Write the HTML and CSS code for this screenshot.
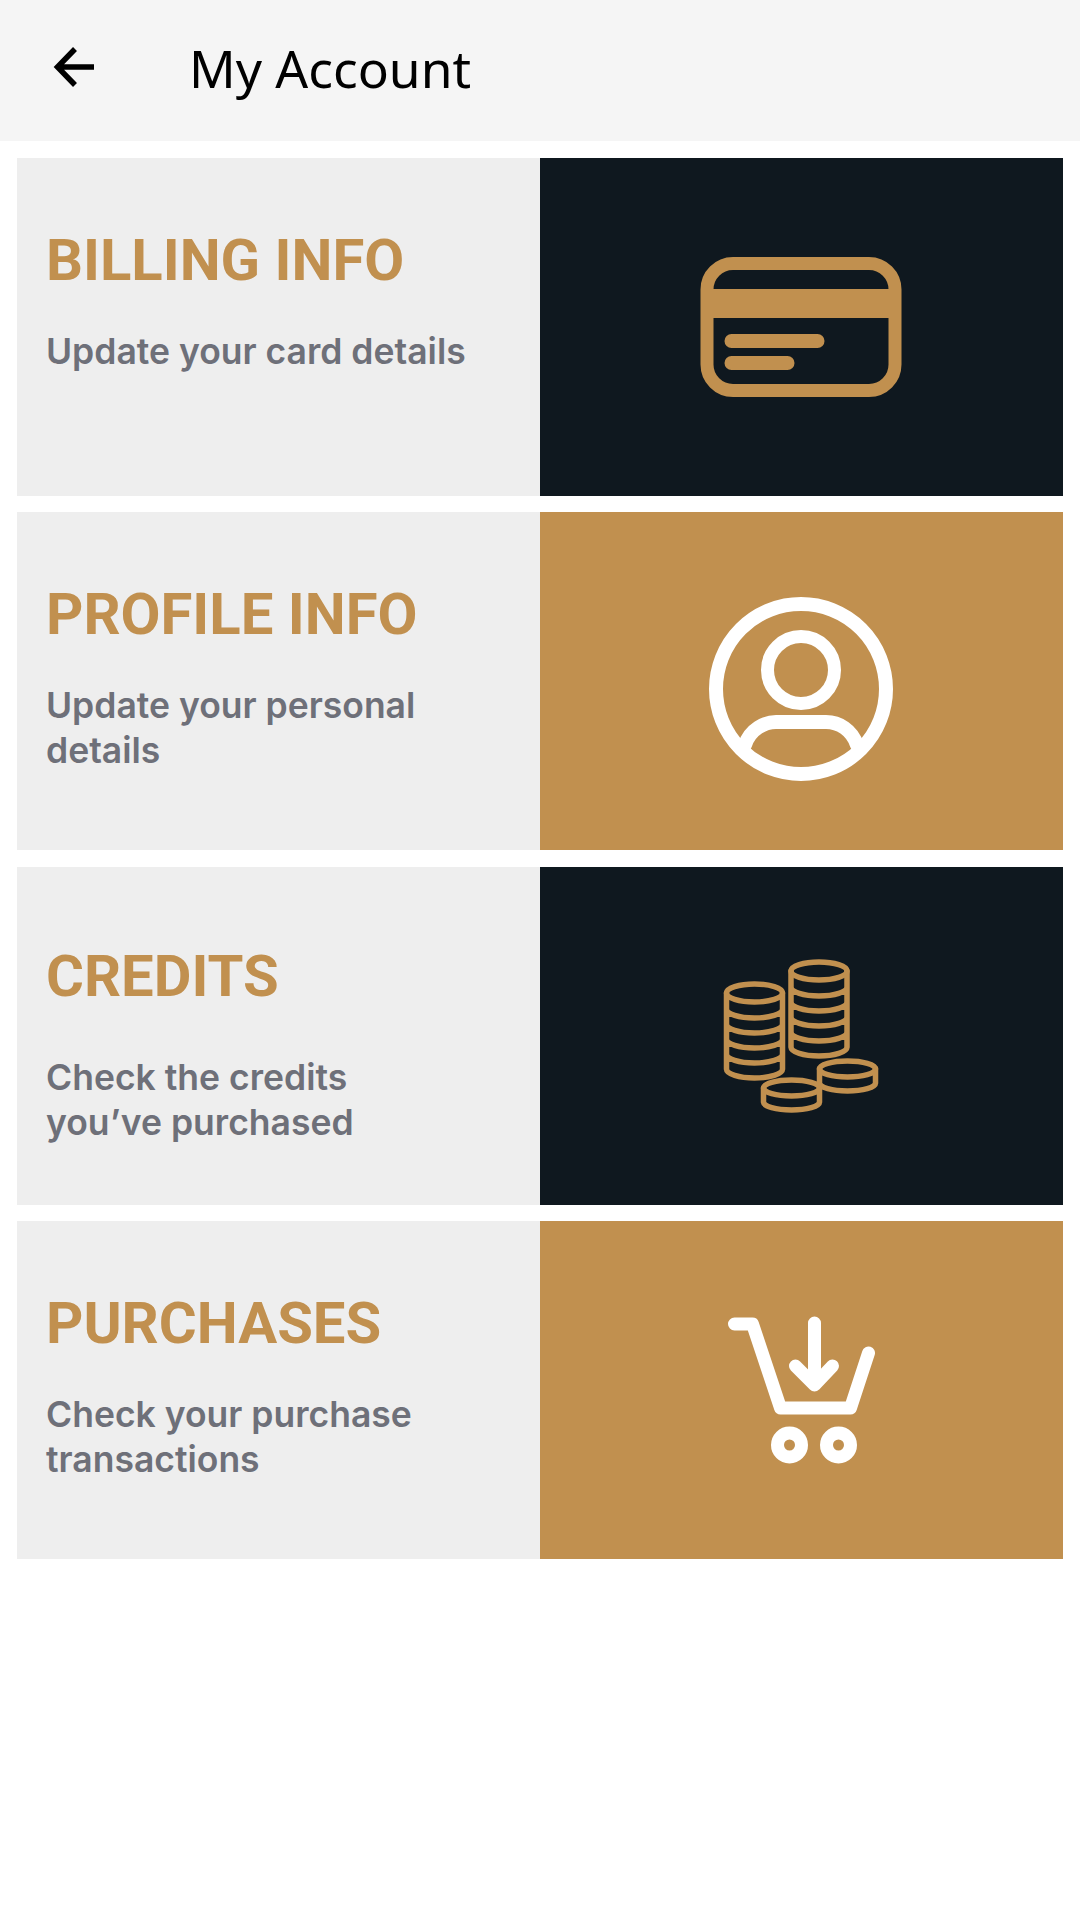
FILE: index.html
```html
<!doctype html>
<html lang="en">
<head>
	<meta charset="UTF-8">
	<title>My Account</title>
	<link rel="stylesheet" href="styles.css">
</head>
<body>
	<div class="top">
		<svg class="back" width="44" height="46" viewBox="0 0 44 46">
			<path d="M42 23H6M23 5L5.500 23L23 41"/>
		</svg>
		<h1>My Account</h1>
	</div>

	<div class="list">
		<div class="row">
			<div class="info">
				<h2>BILLING INFO</h2>
				<p>Update your card details</p>
			</div>
			<div class="pic dark">
				<svg width="210" height="150" viewBox="0 0 210 150">
					<rect class="line" x="10" y="11.500" width="188" height="127" rx="26" stroke-width="13"/>
					<rect class="fill" x="10" y="37" width="188" height="29"/>
					<rect class="fill" x="27.500" y="82" width="100" height="14" rx="7"/>
					<rect class="fill" x="27.500" y="104" width="70" height="14" rx="7"/>
				</svg>
			</div>
		</div>

		<div class="row">
			<div class="info">
				<h2>PROFILE INFO</h2>
				<p>Update your personal<br>details</p>
			</div>
			<div class="pic gold">
				<svg class="down" width="192" height="192" viewBox="0 0 192 192">
					<circle class="line" cx="95" cy="96" r="85" stroke-width="14"/>
					<circle class="line" cx="95" cy="77" r="33.500" stroke-width="13"/>
					<path class="line" d="M39 152C44 136 59 129 70 129H120C133 129 146 137 151 152" stroke-width="14"/>
				</svg>
			</div>
		</div>

		<div class="row">
			<div class="info low">
				<h2>CREDITS</h2>
				<p>Check the credits<br>you’ve purchased</p>
			</div>
			<div class="pic dark">
				<svg width="162" height="162" viewBox="0 0 162 162">
					<g class="line" stroke-width="5.500">
						<ellipse cx="98" cy="16" rx="28" ry="9"/>
						<path d="M70 16v76M126 16v76M70 32a28 9 0 0 0 56 0M70 47a28 9 0 0 0 56 0M70 62a28 9 0 0 0 56 0M70 77a28 9 0 0 0 56 0M70 92a28 9 0 0 0 56 0"/>
						<ellipse cx="33.500" cy="38" rx="28" ry="9"/>
						<path d="M5.500 38v76M61.500 38v76M5.500 54a28 9 0 0 0 56 0M5.500 69a28 9 0 0 0 56 0M5.500 84a28 9 0 0 0 56 0M5.500 99a28 9 0 0 0 56 0M5.500 114a28 9 0 0 0 56 0"/>
						<ellipse cx="126.500" cy="114" rx="28" ry="8"/>
						<path d="M98.500 114v14M154.500 114v14M98.500 128a28 8 0 0 0 56 0"/>
						<ellipse cx="70.500" cy="133" rx="28" ry="8"/>
						<path d="M42.500 133v14M98.500 133v14M42.500 147a28 8 0 0 0 56 0"/>
					</g>
				</svg>
			</div>
		</div>

		<div class="row">
			<div class="info">
				<h2>PURCHASES</h2>
				<p>Check your purchase<br>transactions</p>
			</div>
			<div class="pic gold">
				<svg width="160" height="160" viewBox="0 0 160 160">
					<g class="line" stroke-width="13">
						<path d="M12.500 14H30.500L58.500 98H128.500L146.500 43"/>
						<path d="M92.500 13V75M73.500 56L92.500 75L110.500 56"/>
						<circle cx="67.500" cy="135" r="12"/>
						<circle cx="116.500" cy="135" r="12"/>
					</g>
				</svg>
			</div>
		</div>
	</div>
</body>
</html>
```

FILE: styles.css
```css
*{
	padding:0;
	margin:0;
	box-sizing:border-box;
}
body{
	width:1080px;
	height:1920px;
	background:#fff;
	overflow:hidden;
}
.top{
	height:141px;
	background:#f5f5f5;
	display:flex;
	align-items:center;
	padding-left:52px;
	gap:93px;
}
.top h1{
	font-family:"Noto Sans",sans-serif;
	font-size:51.5px;
	font-weight:400;
	color:#000;
	margin-top:-6px;
}
.back{
	margin-top:-7px;
}
.back path{
	fill:none;
	stroke:#000;
	stroke-width:5.5;
}
.list{
	padding:17px 17px 0;
	display:flex;
	flex-direction:column;
	gap:16.33px;
}
.row{
	height:338px;
	display:flex;
}
.info{
	width:523px;
	background:#eee;
	padding:67px 0 0 29px;
}
.info.low{
	padding-top:74px;
}
.info h2{
	font-family:Roboto,sans-serif;
	font-size:58px;
	font-weight:700;
	line-height:70px;
	color:#c1904f;
}
.info p{
	font-family:Inter,sans-serif;
	font-size:35.5px;
	font-weight:600;
	line-height:45px;
	color:#6e7079;
	margin-top:34px;
}
.info.low p{
	margin-top:44px;
}
.pic{
	width:523px;
	display:flex;
	align-items:center;
	justify-content:center;
}
.dark{
	background:#0f181f;
}
.gold{
	background:#c1904f;
}
.down{
	margin-top:15px;
}
.line{
	fill:none;
	stroke-linecap:round;
	stroke-linejoin:round;
}
.dark .line{
	stroke:#c1904f;
}
.gold .line{
	stroke:#fff;
}
.fill{
	fill:#c1904f;
}
```
